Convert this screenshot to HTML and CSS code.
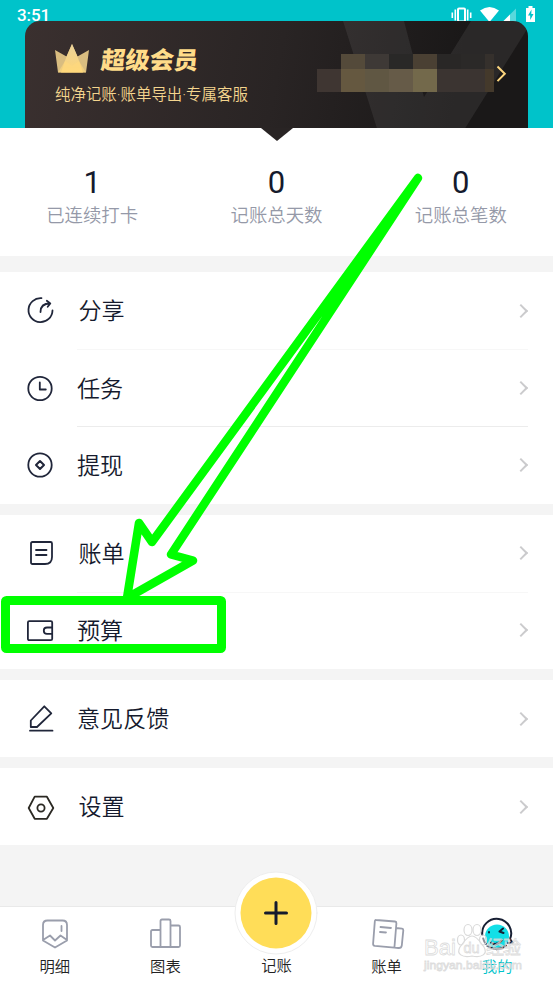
FILE: index.html
```html
<!DOCTYPE html>
<html lang="zh-CN">
<head>
<meta charset="utf-8">
<title>我的</title>
<link rel="stylesheet" href="styles.css">
</head>
<body>
<div class="app">
  <header class="header">
    <div class="status">
      <span class="time">3:51</span>
      <svg class="status-icons" width="86" height="18" viewBox="450 5 86 18">
        <rect x="458" y="8.5" width="7" height="13" rx="1" fill="none" stroke="#fff" stroke-width="2"/>
        <path d="M455.3 9.5v11M452.3 12.500v5.500M467.700 9.500v11M470.700 12.500v5.500" stroke="#fff" stroke-width="1.600"/>
        <path d="M480 10.500Q489.500 3.500 499 10.500L489.500 22z" fill="#fff"/>
        <path d="M516 8.500V22h-13.500z" fill="#fff" opacity=".35"/><path d="M510 14.500V22h-7.500z" fill="#fff"/>
        <path d="M526 8h2.500V6h4v2h2.500v14h-9z" fill="#fff"/><path d="M531.500 9.500l-3.500 6h2.200v4.500l3.300-6h-2.200z" fill="#00c3ca"/>
      </svg>
    </div>
    <section class="vip">
      <svg class="vip-art" width="504" height="107" viewBox="25 21 504 107">
        <path d="M343 21H404L424 97L471 21H521L528.500 27L465 128.500H377z" fill="#fff" opacity=".07"/>
        <g shape-rendering="crispEdges">
          <path fill="#544a3a" d="M341 54h24v15h-24z"/><path fill="#3e3936" d="M365 54h24v15h-24z"/><path fill="#292827" d="M389 54h24v15h-24z"/><path fill="#4a4033" d="M413 54h24v15h-24z"/><path fill="#292726" d="M437 54h24v15h-24z"/><path fill="#2b2928" d="M461 54h24v15h-24z"/><path fill="#35302c" d="M485 54h9v15h-9z"/>
          <path fill="#3f3632" d="M317 69h24v23h-24z"/><path fill="#655840" d="M341 69h24v23h-24z"/><path fill="#605743" d="M365 69h24v23h-24z"/><path fill="#665b48" d="M389 69h24v23h-24z"/><path fill="#73694b" d="M413 69h24v23h-24z"/><path fill="#3b3431" d="M437 69h48v23h-48z"/><path fill="#44392b" d="M485 69h9v23h-9z"/>
        </g>
        <path d="M497.500 66.500l7.300 7.300-7.300 7.300" fill="none" stroke="#fcd57d" stroke-width="2"/>
      </svg>
      <div class="vip-text">
        <div class="vip-title">
          <svg width="34" height="29" viewBox="0 0 34 29">
            <defs><linearGradient id="gold" x2="0" y2="1"><stop stop-color="#ead29a"/><stop offset="1" stop-color="#ffd676"/></linearGradient></defs>
            <path d="M0 6L11.500 12.500 17 0l5.500 12.500L34 6l-3 22.500H3z" fill="#d9bd80"/>
            <path d="M17 0L11.500 12.500 6 28.500h22L22.500 12.500z" fill="url(#gold)"/>
            <path d="M3 28.500L10 17l7 5 7-5 7 11.500z" fill="#ffd97d" opacity=".6"/>
          </svg>
          <h1>超级会员</h1>
        </div>
        <p>纯净记账·账单导出·专属客服</p>
      </div>
    </section>
  </header>
  <section class="stats">
    <svg class="notch" width="32" height="14" viewBox="0 0 32 14"><path d="M0 0h32L16 13z" fill="#292424"/></svg>
    <div class="stat"><b>1</b><span>已连续打卡</span></div>
    <div class="stat"><b>0</b><span>记账总天数</span></div>
    <div class="stat"><b>0</b><span>记账总笔数</span></div>
  </section>
  <main class="menu">
    <section class="group first">
      <div class="row"><svg class="icon" viewBox="0 0 32 32"><path d="M17.500 3.200A12 12 0 1 0 28.500 15.500"/><path d="M16.500 17C16.500 11.500 19 8.500 26 8.500M22.800 5.800L26.300 8.500l-2.600 3.200"/></svg><span class="label nudge">分享</span><i class="chev"></i></div>
      <div class="row"><svg class="icon" viewBox="0 0 32 32"><circle cx="16" cy="16.500" r="11.700"/><path d="M15.800 10.500v7h6"/></svg><span class="label">任务</span><i class="chev"></i></div>
      <div class="row"><svg class="icon" viewBox="0 0 32 32"><circle cx="16" cy="16" r="11.700"/><path stroke-width="2" d="M16 12l4 4-4 4-4-4z"/></svg><span class="label">提现</span><i class="chev"></i></div>
    </section>
    <section class="group">
      <div class="row"><svg class="icon" viewBox="0 0 32 32"><path d="M8.500 5h18Q28 5 28 6.500V20Q28 27 21 27H8.500Q7 27 7 25.500v-19Q7 5 8.500 5zM12 13h10.500M12 18h10.500"/></svg><span class="label nudge">账单</span><i class="chev"></i></div>
      <div class="row"><svg class="icon" viewBox="0 0 32 32"><path d="M5.300 7.200h21.500q1.400 0 1.400 1.400v16.200q0 1.400-1.400 1.400H5.300q-1.400 0-1.400-1.400V8.600q0-1.400 1.400-1.400zM28 13.500h-5a3.200 3.200 0 0 0 0 6.400h5"/></svg><span class="label">预算</span><i class="chev"></i></div>
    </section>
    <section class="group">
      <div class="row"><svg class="icon" viewBox="0 0 32 32"><path d="M6.800 17.500L20.300 3.300l7 7L13 24H6.800zM6 27.700h22.500"/></svg><span class="label">意见反馈</span><i class="chev"></i></div>
    </section>
    <section class="group">
      <div class="row"><svg class="icon dark" viewBox="0 0 32 32"><path d="M10.700 5.700h12.200L29.300 17l-6.400 10.800H10.700L4.700 17z"/><circle cx="17" cy="17" r="3.600"/></svg><span class="label nudge">设置</span><i class="chev"></i></div>
    </section>
  </main>
  <nav class="tabs">
    <div class="tab"><svg viewBox="0 0 36 36"><path d="M6 24.500V9Q6 4.500 10.500 4.500h15q4.500 0 4.500 4.500v15.500l-12 7zM6 24l7-4.500 5 5 5.500-5 6.500 4.500M24.500 10v5"/></svg><span>明细</span></div>
    <div class="tab"><svg viewBox="0 0 36 36"><path d="M13.500 31V5q0-1.500 1.500-1.500h7q1.500 0 1.500 1.500v26M13.500 14H5.500Q4 14 4 15.500v14Q4 31 5.500 31h26q1.500 0 1.500-1.500V11Q33 9.500 31.500 9.500h-8"/></svg><span>图表</span></div>
    <div class="tab add"><svg class="fab" viewBox="0 0 84 84"><circle cx="42" cy="42" r="41" fill="#fff" stroke="#eee"/><circle cx="42" cy="42" r="35.500" fill="#ffdd58"/><path d="M31.500 42h21M42 31.500v21" stroke="#151a2d" stroke-width="3" stroke-linecap="round"/></svg><span>记账</span></div>
    <div class="tab"><svg viewBox="0 0 36 36"><path d="M7 4l19 1.500q1.500.2 1.400 1.700l-2 24.500-19.500-1.800q-2-.3-1.800-2.300l1.700-22Q6 3.800 7 4zM27 12l6 .6q1.400.2 1.300 1.700l-1.500 15q-.4 3-3.500 2.700l-3.900-.3M11.500 11l10.500 1M11 16l6 .5"/></svg><span>账单</span></div>
    <div class="tab active"><svg viewBox="0 0 36 36"><circle cx="18" cy="20.500" r="12" fill="#12dfe7" stroke="none"/><path class="face" d="M3.300 19A14.500 14.500 0 1 1 31 23l2.500 3.500-4.500.5M27 29.500Q18 36.500 8.500 30M4.200 22.500q1 4 2.800 5.500M12 26.500Q17 30.500 22.500 24.500M24 12.500l-3.500 3 4 1.500M10 16v.5"/></svg><span>我的</span></div>
  </nav>
  <svg class="annotation" width="553" height="984" viewBox="0 0 553 984">
    <path d="M418 178L152 542 139 523 127 598 193 560.500 171 554.500z"/>
    <rect x="5.500" y="600.500" width="216" height="48" rx="1" stroke-width="9"/>
  </svg>
  <svg class="watermark" width="110" height="56" viewBox="418 920 110 56">
    <g fill="#fff" fill-opacity=".5" stroke="#dadada" stroke-width="1.2">
      <ellipse cx="461" cy="940" rx="3.500" ry="5"/><ellipse cx="468" cy="930" rx="4" ry="5.500"/><ellipse cx="477" cy="930" rx="4" ry="5.500"/><ellipse cx="483" cy="940" rx="3.500" ry="5"/>
      <path d="M472 936C477 936 480 942 484 947C488 954 482 958 472 956C462 958 456 954 460 947C464 942 467 936 472 936z"/>
    </g>
    <g class="wm-text"><text x="424" y="955" font-size="22" textLength="32" lengthAdjust="spacingAndGlyphs">Bai</text><text x="463.500" y="953" font-size="14.500">du</text><text x="486" y="954" font-size="18" textLength="35">经验</text><text x="424" y="968.500" font-size="11.500" textLength="98" lengthAdjust="spacingAndGlyphs">jingyan.baidu.com</text></g>
  </svg>
</div>
</body>
</html>
```
FILE: styles.css
```css
* { box-sizing: border-box; }
body, h1, p { margin: 0; }
body { background: #f4f4f4; font-family: Roboto, "Noto Sans CJK SC", sans-serif; color: #151a2d; }
.app { position: relative; width: 553px; height: 984px; overflow: hidden; display: flex; flex-direction: column; }
.header { height: 128px; background: #00c3ca; flex: none; overflow: hidden; }
.status { height: 21.4px; padding: 5px 17px 0; display: flex; justify-content: space-between; color: #fff; }
.time { font-size: 17px; line-height: 21px; font-weight: 500; letter-spacing: -.1px; }
.status-icons { flex: none; }
.vip { position: relative; height: 107px; margin: 0 25px 0 24.6px; border-radius: 15px 15px 0 0; overflow: hidden; background: linear-gradient(100deg, #3a302f, #292424 50%, #1a1818 85%); }
.vip-art { position: absolute; left: 0; top: 0; }
.vip-text { padding: 23px 0 0 30.4px; }
.vip-title { display: flex; gap: 12.5px; height: 34px; }
.vip h1 { font-size: 24.3px; line-height: 34px; font-weight: 900; transform: skewX(-6deg); color: #ffdc89; }
.vip p { font-size: 15.45px; line-height: 22px; margin-top: 6px; color: #f4d58e; font-weight: 350; white-space: nowrap; }
.stats { position: relative; height: 128px; flex: none; padding-top: 37px; background: #fff; display: flex; }
.notch { position: absolute; left: 260.5px; top: 0; }
.stat { flex: 1; display: flex; flex-direction: column; align-items: center; }
.stat b { font-size: 31px; line-height: 36px; font-weight: 400; }
.stat span { font-size: 18.4px; line-height: 29px; font-weight: 350; color: #9599a8; }
.menu { flex: 1; padding-top: 16px; display: flex; flex-direction: column; gap: 11px; }
.group { background: #fff; }
.row { position: relative; height: 77.2px; padding: 0 25px 0 24px; display: flex; align-items: center; }
.row + .row::before { content: ""; position: absolute; left: 77px; right: 25px; top: 0; height: 1px; background: #f7f7f7; }
.first .row:last-child::before { background: #ececec; }
.icon { width: 32px; height: 32px; margin-right: 21px; fill: none; stroke: #20263a; stroke-width: 1.8; stroke-linejoin: round; stroke-linecap: round; }
.icon.dark { stroke: #2b2923; }
.label { font-size: 23.1px; line-height: 34px; margin-top: 3.5px; font-weight: 350; }
.nudge { margin-left: 1.5px; }
.chev { width: 10px; height: 10px; margin: 0 2.5px 0 auto; border: solid #cbcbcd; border-width: 1.8px 1.8px 0 0; border-width: 2px 2px 0 0; transform: rotate(45deg); }
.tabs { height: 78px; flex: none; background: #fff; border-top: 1px solid #e9e9e9; display: flex; }
.tab { position: relative; flex: 1; display: flex; flex-direction: column; align-items: center; padding-top: 9px; font-size: 15.3px; line-height: 22px; font-weight: 350; color: #222; gap: 4px; }
.tab svg { width: 36px; height: 36px; margin-left: -1px; fill: none; stroke: #9a9eac; stroke-width: 1.8; stroke-linejoin: round; stroke-linecap: round; }
.tab span { margin-left: -1px; }
.add { padding-top: 48px; }
.add span { margin-left: 0; }
.tab .fab { position: absolute; top: -36px; width: 84px; height: 84px; margin: 0; stroke: none; stroke-width: 1; }
.tab.active { color: #00c3ca; }
.tab .face { stroke: #182034; stroke-width: 2; }
.annotation { position: absolute; inset: 0; fill: none; stroke: #0f0; stroke-width: 8.5; stroke-linejoin: round; }
.watermark { position: absolute; left: 418px; top: 920px; }
.wm-text { font-family: "Liberation Sans", "Noto Sans CJK SC", sans-serif; font-weight: 400; fill: #fff; fill-opacity: .45; stroke: #d4d4d4; stroke-opacity: .8; stroke-width: .8px; }
```
